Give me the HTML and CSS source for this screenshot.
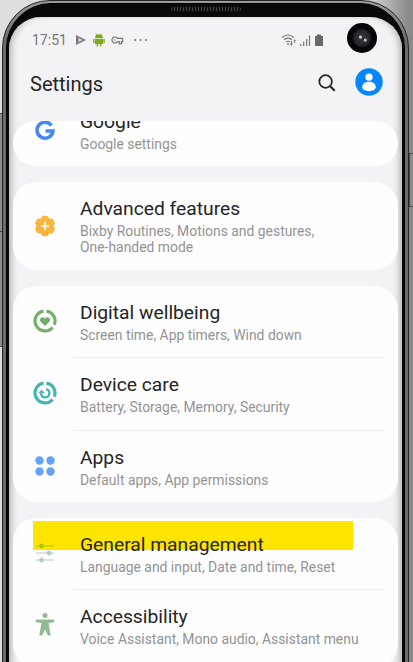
FILE: index.html
```html
<!DOCTYPE html>
<html lang="en">
<head>
<meta charset="utf-8">
<title>Settings</title>
<link rel="stylesheet" href="styles.css">
</head>
<body>
<div class="scene">
  <i class="side-key left-a"></i><i class="side-key left-b"></i><i class="side-key right-a"></i>
  <div class="frame"><div class="bezel"><i class="speaker"></i>
  <main class="screen">
    <div class="status">
      <span class="clock">17:51</span>
      <svg class="notices" width="74" height="14" viewBox="0 0 74 14">
        <path d="M1 2v10l10-5z" fill="#777"/><path d="M3.500 5l4 2-4 2z" fill="#ddd"/><path d="M2 3l6 5M2 11l6-5" stroke="#aaa" stroke-width=".6"/>
        <g fill="#80a91c"><path d="M20 5.200a4 4 0 0 1 8 0zM20 6h8v5h-8z"/><path d="M18.900 6.400v3.200M29.100 6.400v3.200M22.400 10v3M25.600 10v3" stroke="#80a91c" stroke-width="1.400" stroke-linecap="round"/><path d="M21 .5l1.300 2M27 .5l-1.300 2" stroke="#80a91c" stroke-width=".7"/></g>
        <path d="M42.500 5.400a3 3 0 1 0 0 3.200h1.800v2h2.300v-2h1v-3.200z" fill="none" stroke="#777" stroke-width="1.200"/><circle cx="39.800" cy="7" r=".8" fill="#777"/>
        <g fill="#777"><circle cx="60" cy="7" r="1"/><circle cx="65.500" cy="7" r="1"/><circle cx="71" cy="7" r="1"/></g>
      </svg>
      <svg class="signals" width="44" height="14" viewBox="0 0 44 14">
        <g fill="none" stroke="#777" stroke-width="1.100"><path d="M1 4.500q6-5 12 0M3 6.800q4-3.400 8 0M5 9q2-1.600 4 0"/></g><path d="M9 10.500h3l-1.500 2.500zM10 8h1v3h-1zM13.200 10V8h-.7l1.200-2 1.200 2h-.7v2z" fill="#777"/><circle cx="7" cy="11" r=".9" fill="#777"/>
        <path d="M19.700 13v-2M22.700 13V8.500M25.700 13V6M28.500 13V2.500" stroke="#777" stroke-width="1.200"/>
        <path d="M34 3h2V1.500h4V3h2v10h-8z" fill="#686868"/>
      </svg>
      <i class="camera"></i>
    </div>
    <header class="toolbar">
      <h1>Settings</h1>
      <svg class="search" width="20" height="20" viewBox="0 0 20 20" fill="none" stroke="#292929" stroke-width="1.800"><circle cx="8.600" cy="8.500" r="6.300"/><path d="M13.200 13.200l4.500 4.500" stroke-width="2.200"/></svg>
      <svg class="avatar" width="28" height="28" viewBox="0 0 28 28"><circle cx="14" cy="14" r="13.700" fill="#0787fb"/><g fill="#fff"><circle cx="14" cy="9.200" r="3.600"/><path d="M7.200 19c0-7 13.600-7 13.600 0 0 5.500-13.600 5.500-13.600 0z"/></g></svg>
    </header>
    <div class="list">
      <section class="card clipped"><article class="row google">
        <svg class="icon" viewBox="0 0 24 24"><path d="M18.500 6.500A8 8 0 1 0 20 12h-7.500" fill="none" stroke="#4488f0" stroke-width="3.500"/></svg>
        <div class="copy"><h2>Google</h2><p>Google settings</p></div></article></section>
      <section class="card advanced-card"><article class="row advanced">
        <svg class="icon" viewBox="0 0 24 24"><g fill="#fbb43c"><circle cx="12" cy="12" r="8.800"/><rect x="8.500" y="1.800" width="7" height="20.400" rx="2"/><rect x="8.500" y="1.800" width="7" height="20.400" rx="2" transform="rotate(60 12 12)"/><rect x="8.500" y="1.800" width="7" height="20.400" rx="2" transform="rotate(120 12 12)"/></g><path d="M12 8v8M8 12h8" stroke="#fff" stroke-width="1.700"/></svg>
        <div class="copy"><h2>Advanced features</h2><p>Bixby Routines, Motions and gestures,<br>One-handed mode</p></div></article></section>
      <section class="card trio">
        <article class="row"><svg class="icon" viewBox="0 0 24 24"><path d="M13.500 2.100A10 10 0 0 1 21.300 15.700M19.600 18.500A10 10 0 1 1 10.500 2.100" fill="none" stroke="#73af66" stroke-width="3.200"/><path d="M12 17l-4.300-4.300C5.200 9.500 9.700 6.500 12 9.400c2.300-2.900 6.800.1 4.300 3.300z" fill="#73af66"/></svg>
        <div class="copy"><h2>Digital wellbeing</h2><p>Screen time, App timers, Wind down</p></div></article>
        <article class="row"><svg class="icon" viewBox="0 0 24 24"><path d="M13.500 2.100A10 10 0 0 1 21.300 15.700M19.600 18.500A10 10 0 1 1 10.500 2.100" fill="none" stroke="#45b3af" stroke-width="3.200"/><path d="M13 8.100a4.200 4.200 0 1 1-5 4.400" fill="none" stroke="#45b3af" stroke-width="2.400"/><path d="M5.200 12.500L8.600 8.600l3.300 3.900z" fill="#45b3af"/></svg>
        <div class="copy"><h2>Device care</h2><p>Battery, Storage, Memory, Security</p></div></article>
        <article class="row"><svg class="icon" viewBox="0 0 24 24" fill="#63a2f4"><circle cx="6.500" cy="6.500" r="4.200"/><circle cx="17.500" cy="6.500" r="4.200"/><circle cx="6.500" cy="17.500" r="4.200"/><circle cx="17.500" cy="17.500" r="4.200"/></svg>
        <div class="copy"><h2>Apps</h2><p>Default apps, App permissions</p></div></article>
      </section>
      <section class="card last"><i class="highlight"></i>
        <article class="row general"><svg class="icon" viewBox="0 0 24 24"><g stroke="#b4c9d2" fill="#b4c9d2"><path d="M3 5h18" stroke="#afc400"/><circle cx="8.500" cy="5" r="2" fill="#afc400" stroke="#afc400"/><path d="M3 12h18M3 19h18"/><circle cx="16" cy="12" r="2"/><circle cx="8.500" cy="19" r="2"/></g></svg>
        <div class="copy"><h2>General management</h2><p>Language and input, Date and time, Reset</p></div></article>
        <article class="row"><svg class="icon" viewBox="0 0 24 24" fill="#91ba92"><circle cx="12" cy="2.600" r="2.500"/><path d="M3.500 6.500h17q2 1.400 0 2.800L15.500 10l2.200 12.500h-2.800L12 16.500l-2.900 6H6.300L8.500 10l-5-.7q-2-1.400 0-2.800z"/></svg>
        <div class="copy"><h2>Accessibility</h2><p>Voice Assistant, Mono audio, Assistant menu</p></div></article>
      </section>
    </div>
  </main></div></div>
</div>
</body>
</html>
```
FILE: styles.css
```css
* { box-sizing: border-box; }
body { margin: 0; overflow: hidden; font-family: Roboto, sans-serif; }
h1, h2, p { margin: 0; font-weight: 400; }
svg { display: block; flex: none; }
.scene { position: relative; width: 413px; height: 662px; overflow: hidden; background: linear-gradient(90deg, #dedede 0, #d2d2d2 90%, #8b8989 99%); }
.side-key { position: absolute; width: 4px; border: 1px solid #444; background: #8c8c89; }
.left-a { left: -1px; top: 113px; height: 119px; }
.left-b { left: -1px; top: 231px; height: 116px; }
.right-a { right: 0; top: 153px; height: 54px; border-right-color: #8c8c89; }
.frame { position: relative; margin: 0 4px 0 2px; height: 740px; padding: 2px 3px; border: 1px solid #242424; border-radius: 48px 48px 0 0; background: linear-gradient(#9b9b9b, #6b6b69 40px); }
.bezel { position: relative; height: 730px; padding: 13px 2px 0; border-radius: 45px 45px 0 0; background: #080909; border: 1px solid #000; }
.speaker { position: absolute; top: 3px; left: 164px; width: 70px; height: 4px; border-radius: 2px; background: repeating-linear-gradient(90deg, #444 0 1px, #111 1px 3px); }
.screen { height: 710px; overflow: hidden; border-radius: 32px 32px 0 0; background: #f3f3f5; box-shadow: inset 6px 0 7px -4px #aaa, inset -6px 0 7px -4px #aaa; }
.status { height: 45px; display: flex; align-items: center; padding: 0 25px 0 23px; color: #777; }
.clock { width: 43px; font-size: 14px; }
.signals { margin-left: auto; margin-right: 22px; }
.camera { width: 30px; height: 30px; margin-top: -3px; border-radius: 50%; background: radial-gradient(circle at 45% 47%, #ccc 0 1px, transparent 2px), radial-gradient(circle at 61% 57%, #bbb 0 1px, transparent 2px), radial-gradient(circle, #303138 0 4px, #22232a 8px, #050607 10px); }
.toolbar { height: 59px; display: flex; align-items: center; padding: 0 19px 16px 21px; }
h1 { flex: 1; color: #252525; font-size: 20px; line-height: 28px; }
.search { margin: 0 18px 2px 0; }
.avatar { margin-bottom: 3px; }
.list { padding: 0 4px; }
.card { position: relative; margin-bottom: 16px; border-radius: 24px; background: #fefefe; }
.clipped { height: 45px; overflow: hidden; }
.row { height: 72.750px; display: flex; padding: 13px 0 0 20px; }
.icon { width: 24px; height: 24px; margin-top: 10px; }
.copy { position: relative; width: 305px; margin-left: 23px; white-space: nowrap; }
.row + .row .copy::before { content: ""; position: absolute; left: -6px; right: 0; top: -14px; height: 1px; background: #ededed; }
h2 { color: #242424; font-size: 19.250px; line-height: 28px; }
p { color: #939393; font-size: 13.900px; line-height: 16px; }
.google { margin-top: -26px; }
.google .icon { margin-top: 11px; }
.advanced { height: 88px; }
.advanced .icon { margin-top: 19px; }
.advanced-card { margin-bottom: 15.500px; }
.trio { height: 216px; margin-bottom: 16px; }
.highlight { position: absolute; left: 20px; top: 3px; width: 320px; height: 29px; background: #fee500; }
.general .icon, .general .copy { position: relative; }
.last { height: 150px; }
```
